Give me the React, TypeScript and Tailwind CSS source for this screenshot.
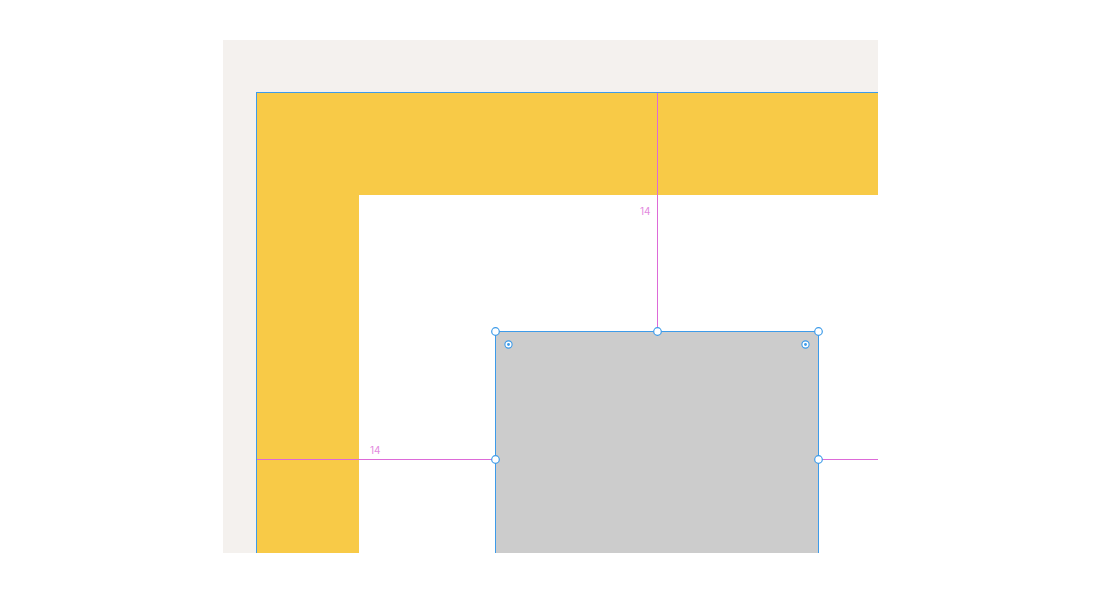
import React from "react";

export default function App() {
  const blue = "#3d9be9";
  const pink = "#dd6ad8";
  return (
    <div className="w-[1100px] h-[593px] bg-white pt-[40px] pl-[223px]" style={{ fontFamily: "Inter, 'Liberation Sans', sans-serif" }}>
      <div className="relative w-[655px] h-[513px] bg-[#f4f1ee] overflow-hidden">
        {/* Yellow frame */}
        <div className="absolute left-[33px] top-[52px] w-[700px] h-[500px] bg-[#f8ca47] border-l border-t border-[#3d9be9] pl-[102px] pt-[102px]">
          <div className="w-full h-full bg-white" />
        </div>
        {/* Gray rect */}
        <div className="absolute left-[272px] top-[291px] w-[324px] h-[260px] bg-[#cccccc] border-l border-r border-t border-[#3d9be9]" />
        {/* Guides & handles */}
        <svg className="absolute left-0 top-0" width="655" height="513" viewBox="0 0 655 513">
          <line x1="434.5" y1="53" x2="434.5" y2="291" stroke={pink} strokeWidth="1" />
          <line x1="34" y1="419.5" x2="272" y2="419.5" stroke={pink} strokeWidth="1" />
          <line x1="596" y1="419.5" x2="655" y2="419.5" stroke={pink} strokeWidth="1" />
          {[
            [272.5, 291.5],
            [434.5, 291.5],
            [595.5, 291.5],
            [272.5, 419.5],
            [595.5, 419.5],
          ].map(([x, y], i) => (
            <circle key={i} cx={x} cy={y} r="3.8" fill="white" stroke={blue} strokeWidth="1.2" />
          ))}
          {[
            [285.5, 304.5],
            [582.5, 304.5],
          ].map(([x, y], i) => (
            <g key={i}>
              <circle cx={x} cy={y} r="3.6" fill="white" stroke={blue} strokeWidth="1.1" />
              <circle cx={x} cy={y} r="1.4" fill={blue} />
            </g>
          ))}
        </svg>
        <div className="absolute left-[417px] top-[165px] text-[10px] leading-[12px] text-[#e38ade]">14</div>
        <div className="absolute left-[147px] top-[404px] text-[10px] leading-[12px] text-[#e38ade]">14</div>
      </div>
    </div>
  );
}
